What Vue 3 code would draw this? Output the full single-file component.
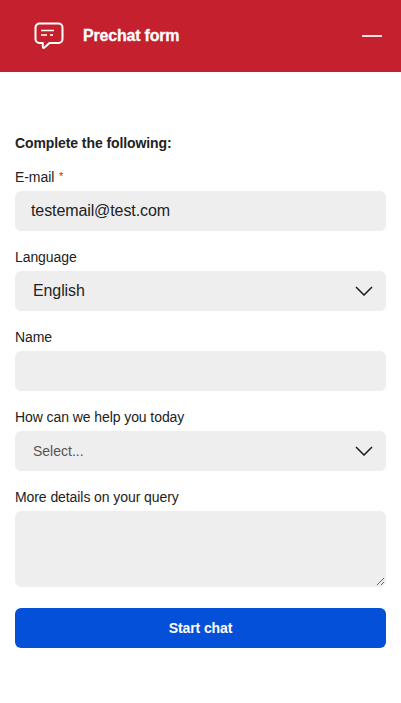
<script setup>
</script>

<template>
  <div class="page">
    <header class="head">
      <div class="title-wrap">
        <svg class="chat" width="30" height="28" viewBox="0 0 30 28" fill="none" stroke="#fff" stroke-width="2">
          <path d="M5.500 1.500h19a4 4 0 0 1 4 4v11.500a4 4 0 0 1-4 4H15.500l-5 4.600q-1.700 1-1.700-1v-3.600H5.500a4 4 0 0 1-4-4V5.500a4 4 0 0 1 4-4z" stroke-linejoin="round"/>
          <path d="M7 8.500h13M7 13h6M16 13h3" stroke-width="1.600"/>
        </svg>
        <span class="title">Prechat form</span>
      </div>
      <span class="minimize"></span>
    </header>
    <form class="form" @submit.prevent>
      <p class="lead">Complete the following:</p>
      <div class="field">
        <label>E-mail <span class="req">*</span></label>
        <div class="box">testemail@test.com</div>
      </div>
      <div class="field">
        <label>Language</label>
        <div class="box sel">English
          <svg class="chev" width="18" height="10" viewBox="0 0 18 10" fill="none" stroke="#222" stroke-width="1.6"><path d="M1 1l8 8 8-8"/></svg>
        </div>
      </div>
      <div class="field">
        <label>Name</label>
        <div class="box"></div>
      </div>
      <div class="field">
        <label>How can we help you today</label>
        <div class="box small sel">Select...
          <svg class="chev" width="18" height="10" viewBox="0 0 18 10" fill="none" stroke="#222" stroke-width="1.6"><path d="M1 1l8 8 8-8"/></svg>
        </div>
      </div>
      <div class="field">
        <label>More details on your query</label>
        <div class="box area">
          <svg class="grip" width="8" height="8" viewBox="0 0 8 8" stroke="#666" stroke-width="1"><path d="M1 8l7-7M5 8l3-3"/></svg>
        </div>
      </div>
      <button class="start" type="button">Start chat</button>
    </form>
  </div>
</template>

<style>
body { margin: 0; background: #fff; }
</style>

<style scoped>
.page { width: 401px; height: 703px; font-family: "Liberation Sans", Arial, sans-serif; color: #222; background: #fff; overflow: hidden; }
.head { height: 72px; background: #c4202e; display: flex; align-items: center; justify-content: space-between; padding: 0 19px 0 34px; box-sizing: border-box; }
.title-wrap { display: flex; align-items: center; gap: 19px; }
.title { color: #fff; font-weight: 700; font-size: 16px; letter-spacing: -0.2px; -webkit-text-stroke: 0.3px #fff; }
.minimize { width: 20px; height: 2px; background: #fbdfe1; display: block; }
.form { padding: 62px 15px 0; display: flex; flex-direction: column; }
.lead { margin: 0 0 16px; font-size: 14px; line-height: 18px; font-weight: 700; letter-spacing: -0.09px; }
.field { margin-bottom: 17px; display: flex; flex-direction: column; gap: 5px; }
label { font-size: 14px; line-height: 18px; letter-spacing: -0.08px; }
.req { color: #c4202e; font-size: 11px; line-height: 0; vertical-align: 2px; margin-left: 1px; }
.box { height: 40px; background: #eee; border-radius: 6px; position: relative; display: flex; align-items: center; padding: 0 16px; box-sizing: border-box; font-size: 16px; letter-spacing: -0.1px; }
.sel { padding-left: 18px; }
.small { font-size: 14px; color: #555; letter-spacing: 0; }
.chev { position: absolute; right: 13px; top: 15px; }
.area { height: 76px; }
.grip { position: absolute; right: 2px; bottom: 2px; }
.start { height: 40px; border: 0; border-radius: 6px; background: #0550d8; color: #fff; font: 700 14px "Liberation Sans", Arial, sans-serif; letter-spacing: -0.1px; margin-top: 4px; }
</style>
